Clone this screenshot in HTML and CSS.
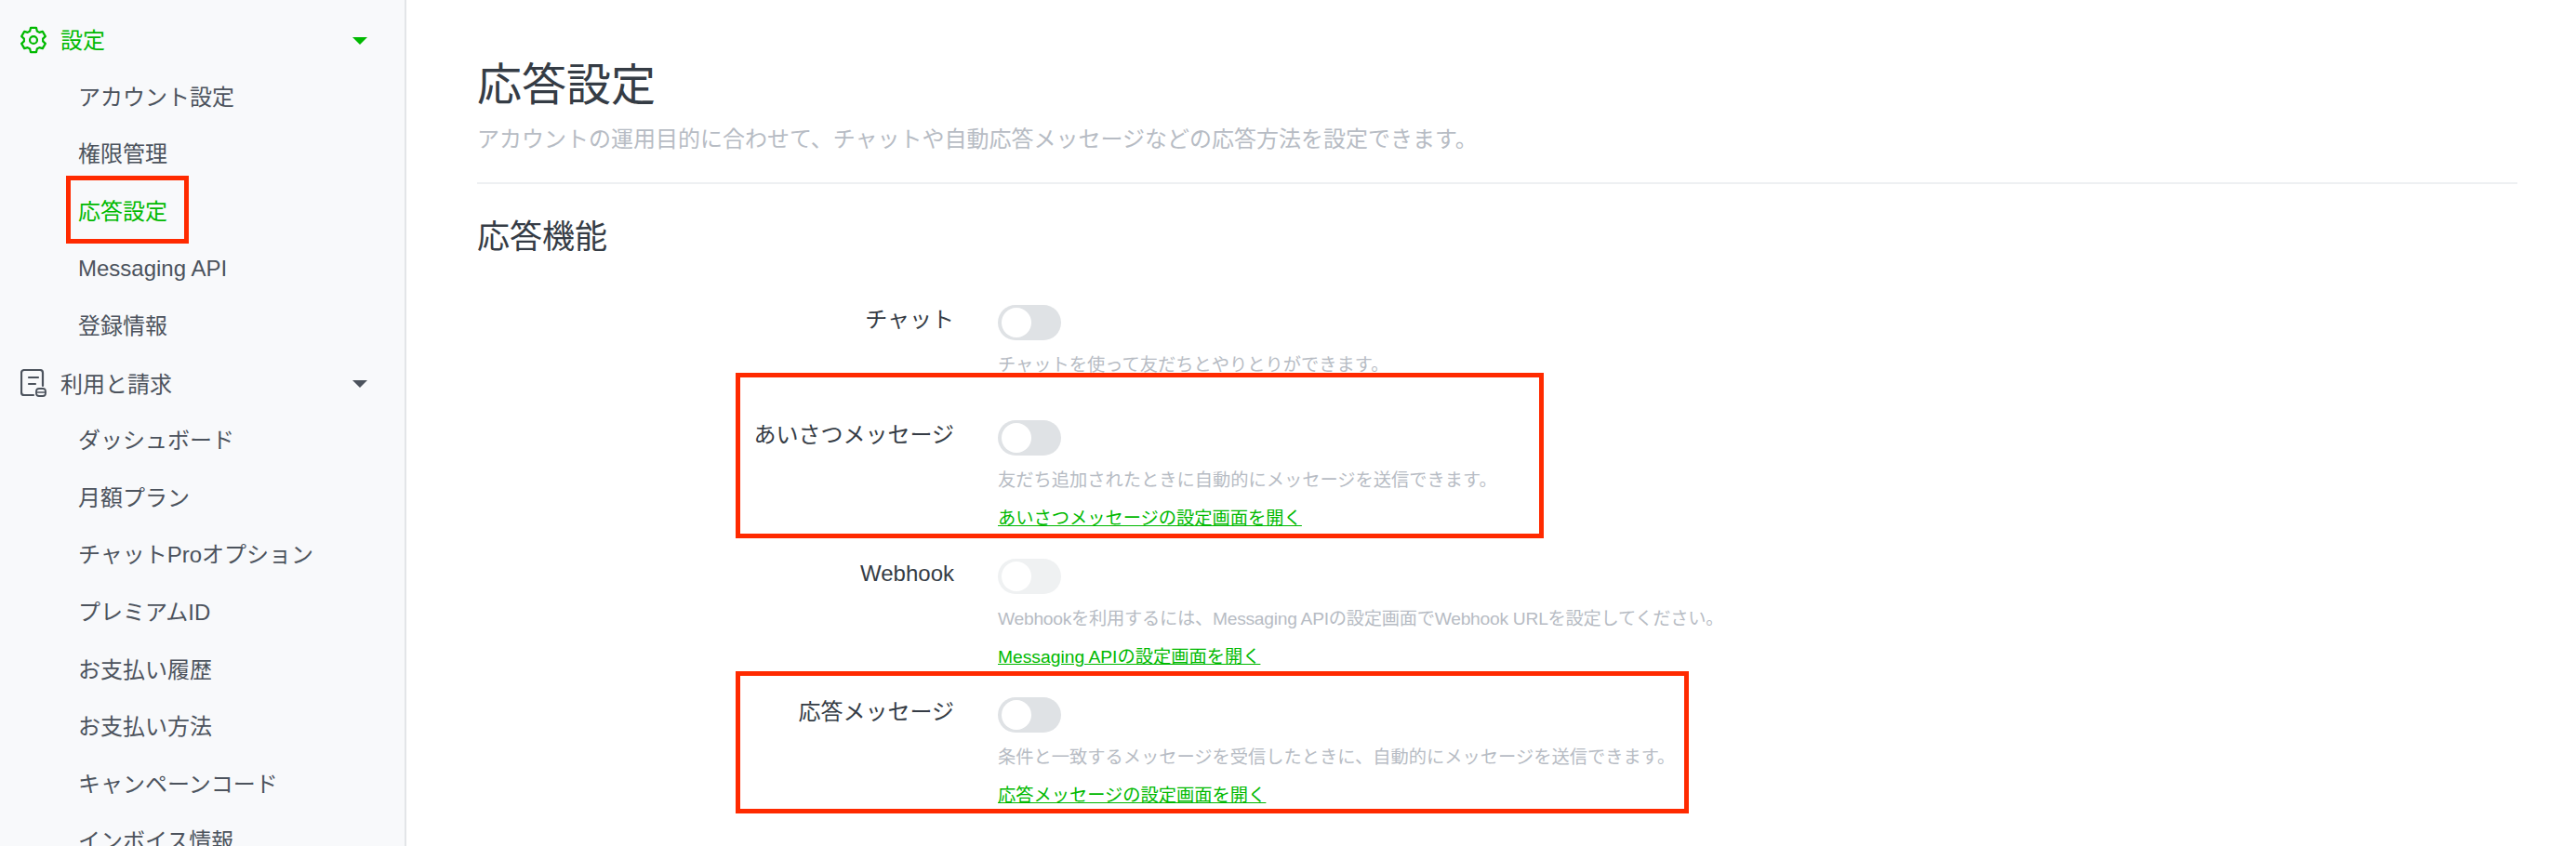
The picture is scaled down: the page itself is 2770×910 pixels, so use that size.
FILE: index.html
```html
<!DOCTYPE html>
<html lang="ja">
<head>
  <meta charset="UTF-8">
  <title>応答設定</title>
  <link rel="stylesheet" href="styles.css">
</head>
<body>
  <nav class="sidebar">
    <div class="nav-head active">
      <svg class="nav-icon" viewBox="0 0 24 24" fill="none" stroke="currentColor" stroke-width="1.9" stroke-linejoin="round">
        <path d="M9.41 .8L14.59 .8L15.3 3.84L17.42 5.07L20.41 4.16L23 8.64L20.71 10.78L20.71 13.22L23 15.36L20.41 19.84L17.42 18.93L15.3 20.16L14.59 23.2L9.41 23.2L8.7 20.16L6.58 18.93L3.59 19.84L1 15.36L3.29 13.22L3.29 10.78L1 8.64L3.59 4.16L6.58 5.07L8.7 3.84Z"/>
        <circle cx="12" cy="12" r="3.4"/>
      </svg>
      <span class="nav-label">設定</span>
      <span class="caret"></span>
    </div>
    <a class="nav-item">アカウント設定</a>
    <a class="nav-item">権限管理</a>
    <a class="nav-item current">応答設定<span class="mark mark-nav"></span></a>
    <a class="nav-item">Messaging API</a>
    <a class="nav-item">登録情報</a>
    <div class="nav-head">
      <svg class="nav-icon" viewBox="0 0 28 30" fill="none" stroke="currentColor" stroke-width="2.2" stroke-linecap="round" stroke-linejoin="round">
        <path d="M24 18V4a3 3 0 0 0-3-3H4a3 3 0 0 0-3 3v21a3 3 0 0 0 3 3h10"/>
        <path d="M9 9h10M9 16h7"/>
        <rect x="17" y="21" width="10" height="8" rx="3" stroke-width="1.8"/>
        <path d="M17 25h10" stroke-width="1.6"/>
      </svg>
      <span class="nav-label">利用と請求</span>
      <span class="caret"></span>
    </div>
    <a class="nav-item">ダッシュボード</a>
    <a class="nav-item">月額プラン</a>
    <a class="nav-item">チャットProオプション</a>
    <a class="nav-item">プレミアムID</a>
    <a class="nav-item">お支払い履歴</a>
    <a class="nav-item">お支払い方法</a>
    <a class="nav-item">キャンペーンコード</a>
    <a class="nav-item">インボイス情報</a>
  </nav>

  <main class="content">
    <header class="page-head">
      <h1>応答設定</h1>
      <p>アカウントの運用目的に合わせて、チャットや自動応答メッセージなどの応答方法を設定できます。</p>
    </header>

    <h2>応答機能</h2>

    <div class="setting">
      <div class="setting-name">チャット</div>
      <div class="setting-body">
        <span class="toggle"></span>
        <p class="desc">チャットを使って友だちとやりとりができます。</p>
      </div>
    </div>

    <div class="setting">
      <span class="mark mark-greeting"></span>
      <div class="setting-name">あいさつメッセージ</div>
      <div class="setting-body">
        <span class="toggle"></span>
        <p class="desc">友だち追加されたときに自動的にメッセージを送信できます。</p>
        <a class="link">あいさつメッセージの設定画面を開く</a>
      </div>
    </div>

    <div class="setting">
      <div class="setting-name">Webhook</div>
      <div class="setting-body">
        <span class="toggle disabled"></span>
        <p class="desc tight">Webhookを利用するには、Messaging APIの設定画面でWebhook URLを設定してください。</p>
        <a class="link">Messaging APIの設定画面を開く</a>
      </div>
    </div>

    <div class="setting">
      <span class="mark mark-reply"></span>
      <div class="setting-name">応答メッセージ</div>
      <div class="setting-body">
        <span class="toggle"></span>
        <p class="desc">条件と一致するメッセージを受信したときに、自動的にメッセージを送信できます。</p>
        <a class="link">応答メッセージの設定画面を開く</a>
      </div>
    </div>
  </main>
</body>
</html>
```

FILE: styles.css
```css
* {
  box-sizing: border-box;
}

html,
body {
  height: 100%;
}

body {
  margin: 0;
  display: flex;
  overflow: hidden;
  background: #fff;
  color: #353c45;
  font-family: "Liberation Sans", "Noto Sans CJK JP", sans-serif;
}

/* sidebar */
.sidebar {
  flex: 0 0 437px;
  height: 910px;
  padding-top: 12px;
  overflow: hidden;
  background: #f8f9fb;
  border-right: 2px solid #e3e5e8;
  color: #4c535d;
  font-size: 24px;
}

.nav-head {
  display: flex;
  align-items: center;
  height: 61.6px;
  padding-left: 22px;
}

.nav-head.active {
  color: #00b900;
}

.nav-icon {
  flex: none;
  width: 28px;
  height: 30px;
}

.nav-label {
  margin-left: 15px;
  margin-bottom: 2px;
}

.caret {
  margin-left: auto;
  margin-right: 40px;
  margin-top: 2px;
  border-top: 8px solid currentColor;
  border-left: 8px solid transparent;
  border-right: 8px solid transparent;
}

.nav-item {
  display: block;
  position: relative;
  height: 61.6px;
  padding-left: 84px;
  line-height: 61.6px;
}

.nav-item.current {
  color: #00b900;
}

/* annotation boxes */
.mark {
  position: absolute;
  border: 5px solid #ff2a00;
  pointer-events: none;
}

.mark-nav {
  left: 71px;
  top: -8px;
  width: 132px;
  height: 73px;
}

.mark-greeting {
  left: -2px;
  top: -51px;
  width: 869px;
  height: 178px;
}

.mark-reply {
  left: -2px;
  top: -28px;
  width: 1025px;
  height: 153px;
}

/* main */
.content {
  flex: 1;
  padding: 63px 63px 0 76px;
}

.page-head {
  height: 135px;
  border-bottom: 2px solid #eef0f2;
}

h1 {
  margin: 0;
  font-size: 48px;
  font-weight: 400;
  line-height: 58px;
}

.page-head p {
  margin: 12px 0 0;
  color: #b7bcc4;
  font-size: 24px;
  line-height: 34px;
}

h2 {
  margin: 34px 0 50px;
  font-size: 35px;
  font-weight: 400;
  line-height: 46px;
}

.setting {
  position: relative;
  display: flex;
  margin-left: 280px;
  margin-bottom: 31px;
}

.setting-name {
  flex: 0 0 233px;
  padding-top: 1px;
  font-size: 24px;
  line-height: 30px;
  text-align: right;
}

.setting-body {
  margin-left: 47px;
}

.toggle {
  display: block;
  position: relative;
  width: 68px;
  height: 38px;
  border-radius: 19px;
  background: #dfe2e5;
}

.toggle::after {
  content: "";
  position: absolute;
  left: 4px;
  top: 3px;
  width: 32px;
  height: 32px;
  border-radius: 50%;
  background: #fff;
}

.toggle.disabled {
  background: #eff1f2;
}

.desc {
  margin: 14px 0 15px;
  color: #b7bcc4;
  font-size: 19.25px;
  line-height: 26px;
}

.desc.tight {
  letter-spacing: -0.27px;
}

.link {
  display: block;
  color: #00b900;
  font-size: 19.25px;
  line-height: 25px;
  text-decoration: underline;
}
```
